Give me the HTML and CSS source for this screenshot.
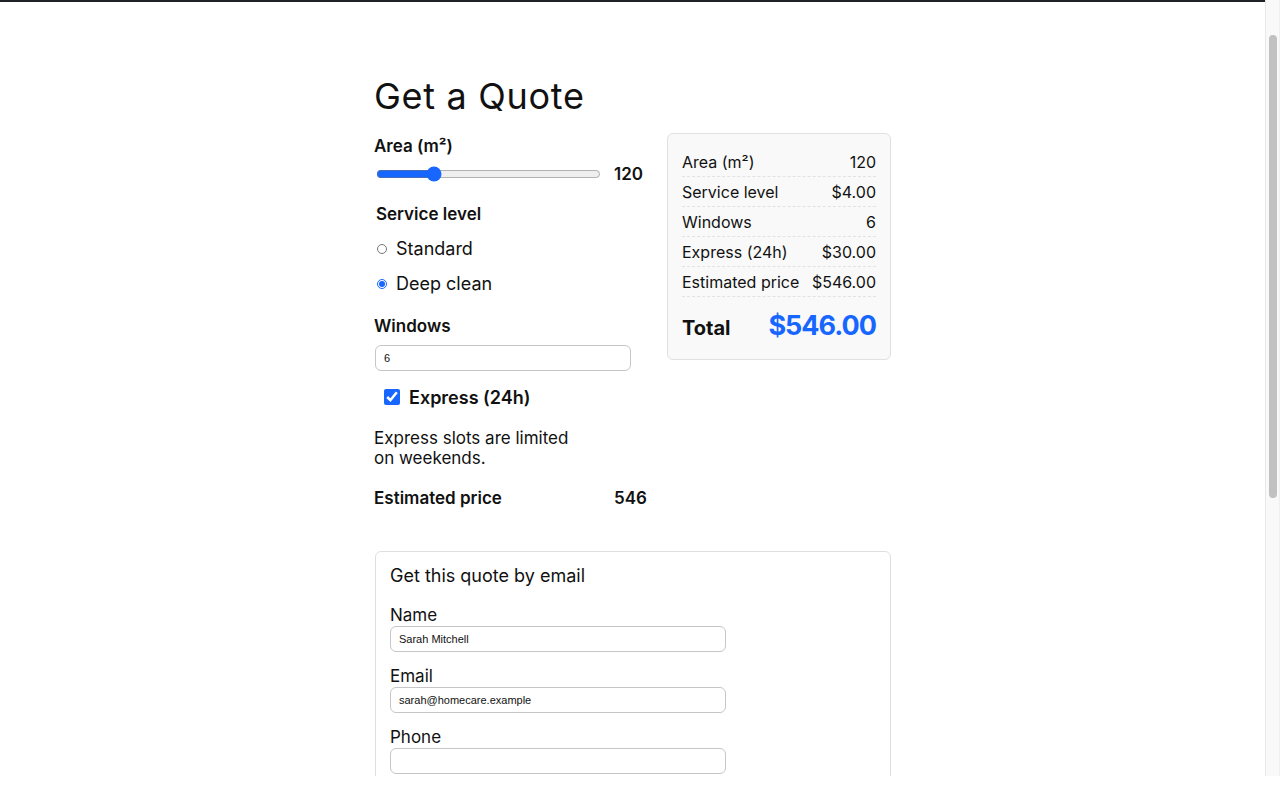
FILE: index.html
```html
<!DOCTYPE html>
<html lang="en">
<head>
    <meta charset="UTF-8">
    <meta name="viewport" content="width=device-width, initial-scale=1.0">
    <title>Get a Quote</title>
    <link rel="stylesheet" href="styles.css">
</head>
<body>
    <div class="window">
        <div class="viewport">
            <header class="topbar"></header>

            <main class="page">
                <h1>Get a Quote</h1>

                <div class="quote">
                    <form class="calc">
                        <label class="field-label area-label" for="area">Area (m²)</label>
                        <div class="range-row">
                            <input type="range" id="area" min="0" max="500" step="10" value="120">
                            <output for="area">120</output>
                        </div>

                        <fieldset class="service">
                            <legend>Service level</legend>
                            <div class="options">
                                <label class="radio"><input type="radio" name="level" value="standard"> Standard</label>
                                <label class="radio"><input type="radio" name="level" value="deep" checked> Deep clean</label>
                            </div>
                        </fieldset>

                        <label class="field-label windows-label" for="windows">Windows</label>
                        <input class="text-input windows" type="text" id="windows" value="6">

                        <label class="check"><input type="checkbox" checked> Express (24h)</label>

                        <p class="note">Express slots are limited on weekends.</p>

                        <div class="estimate">
                            <span>Estimated price</span>
                            <span>546</span>
                        </div>
                    </form>

                    <aside class="summary">
                        <div class="summary-row"><span>Area (m²)</span><span>120</span></div>
                        <div class="summary-row"><span>Service level</span><span>$4.00</span></div>
                        <div class="summary-row"><span>Windows</span><span>6</span></div>
                        <div class="summary-row"><span>Express (24h)</span><span>$30.00</span></div>
                        <div class="summary-row"><span>Estimated price</span><span>$546.00</span></div>
                        <div class="summary-total"><span>Total</span><span class="total-price">$546.00</span></div>
                    </aside>
                </div>

                <section class="email-card">
                    <h2>Get this quote by email</h2>

                    <label class="mail-label" for="name">Name</label>
                    <input class="text-input" type="text" id="name" value="Sarah Mitchell">

                    <label class="mail-label" for="email">Email</label>
                    <input class="text-input" type="text" id="email" value="sarah@homecare.example">

                    <label class="mail-label" for="phone">Phone</label>
                    <input class="text-input" type="text" id="phone" value="">
                </section>
            </main>
        </div>

        <!-- page scrollbar, drawn -->
        <div class="scrollbar"><div class="thumb"></div></div>
    </div>
</body>
</html>
```

FILE: styles.css
```css
html, body {
    height: 100%;
    overflow: hidden;
}

body {
    margin: 0;
    background: #fff;
    color: #111;
    font-family: Inter, "Noto Sans", sans-serif;
}

.window {
    display: flex;
    height: 776px;
}

.viewport {
    flex: 1;
    overflow: hidden;
}

.scrollbar {
    box-sizing: border-box;
    width: 15px;
    padding: 35px 2px 0 3px;
    background: #f9f9f9;
    border-left: 1px solid #e8e8e8;
    border-right: 1px solid #efefef;
}

.thumb {
    height: 463px;
    border-radius: 4px;
    background: #c1c1c1;
}

.topbar {
    height: 2px;
    background: #1f2226;
}

.page {
    width: 517px;
    margin: 0 auto;
    padding: 73px 0 80px;
}

h1 {
    font-size: 36px;
    font-weight: 400;
    line-height: 43px;
    letter-spacing: 0.7px;
    margin: 0 0 15px;
}

/* two columns: calculator + summary */
.quote {
    display: grid;
    grid-template-columns: 273px 224px;
    gap: 20px;
    align-items: start;
}

.calc {
    display: flex;
    flex-direction: column;
    align-items: flex-start;
    padding-top: 1px;
}

.field-label {
    font-size: 17px;
    font-weight: 600;
    line-height: 20px;
}

.area-label {
    margin-top: 2px;
}

.range-row {
    display: flex;
    align-items: center;
    height: 24px;
    margin-top: 6px;
    gap: 11px;
}

.range-row input {
    width: 225px;
    margin: 0 2px;
    accent-color: #1766ff;
}

.range-row output {
    font-size: 17px;
    font-weight: 600;
}

.service {
    border: 0;
    padding: 0;
    margin: 18px 2px 0;
}

.service legend {
    padding: 0;
    font-size: 17px;
    font-weight: 600;
    line-height: 20px;
}

.options {
    padding-top: 7px;
}

.radio {
    display: flex;
    align-items: center;
    height: 35px;
    font-size: 18px;
    gap: 9px;
}

.radio input {
    width: 10px;
    height: 10px;
    margin: 0 0 0 1px;
    accent-color: #1766ff;
}

.windows-label {
    margin-top: 15px;
}

.text-input {
    box-sizing: border-box;
    height: 26px;
    padding: 0 8px;
    border: 1px solid #c6c6c9;
    border-radius: 6px;
    font: 11px "Liberation Sans", Arial, sans-serif;
    color: #111;
    background: #fff;
}

.windows {
    width: 256px;
    margin: 9px 0 0 1px;
}

.check {
    display: flex;
    align-items: center;
    height: 24px;
    margin-top: 14px;
    font-size: 18px;
    font-weight: 600;
}

.check input {
    width: 16px;
    height: 16px;
    margin: 0 9px 0 10px;
    accent-color: #1766ff;
}

.note {
    width: 205px;
    margin: 19px 0 0;
    font-size: 17px;
    line-height: 20px;
}

.estimate {
    display: flex;
    justify-content: space-between;
    align-self: stretch;
    margin-top: 20px;
    font-size: 17px;
    font-weight: 600;
    line-height: 20px;
}

/* price summary */
.summary {
    background: #f9f9f9;
    border: 1px solid #e0e0e2;
    border-radius: 6px;
    padding: 13px 14px 13px;
}

.summary-row {
    display: flex;
    justify-content: space-between;
    padding: 5px 0 4px;
    line-height: 20px;
    font-size: 16px;
    border-bottom: 1px dashed #e2e2e4;
}

.summary-total {
    display: flex;
    justify-content: space-between;
    align-items: baseline;
    margin-top: 11px;
    font-weight: 700;
    line-height: 36px;
}

.summary-total span:first-child {
    font-size: 20px;
}

.total-price {
    font-size: 27px;
    letter-spacing: -1px;
    color: #1766ff;
}

/* email form */
.email-card {
    display: flex;
    flex-direction: column;
    align-items: flex-start;
    margin: 43px 0 0 1px;
    padding: 13px 14px 40px;
    border: 1px solid #dedee0;
    border-radius: 6px;
}

.email-card h2 {
    margin: 0 0 18px;
    font-size: 18px;
    font-weight: 400;
    line-height: 22px;
}

.mail-label {
    font-size: 17px;
    line-height: 20px;
    margin-bottom: 1px;
}

.email-card .text-input {
    width: 336px;
    margin-bottom: 14px;
}
```
